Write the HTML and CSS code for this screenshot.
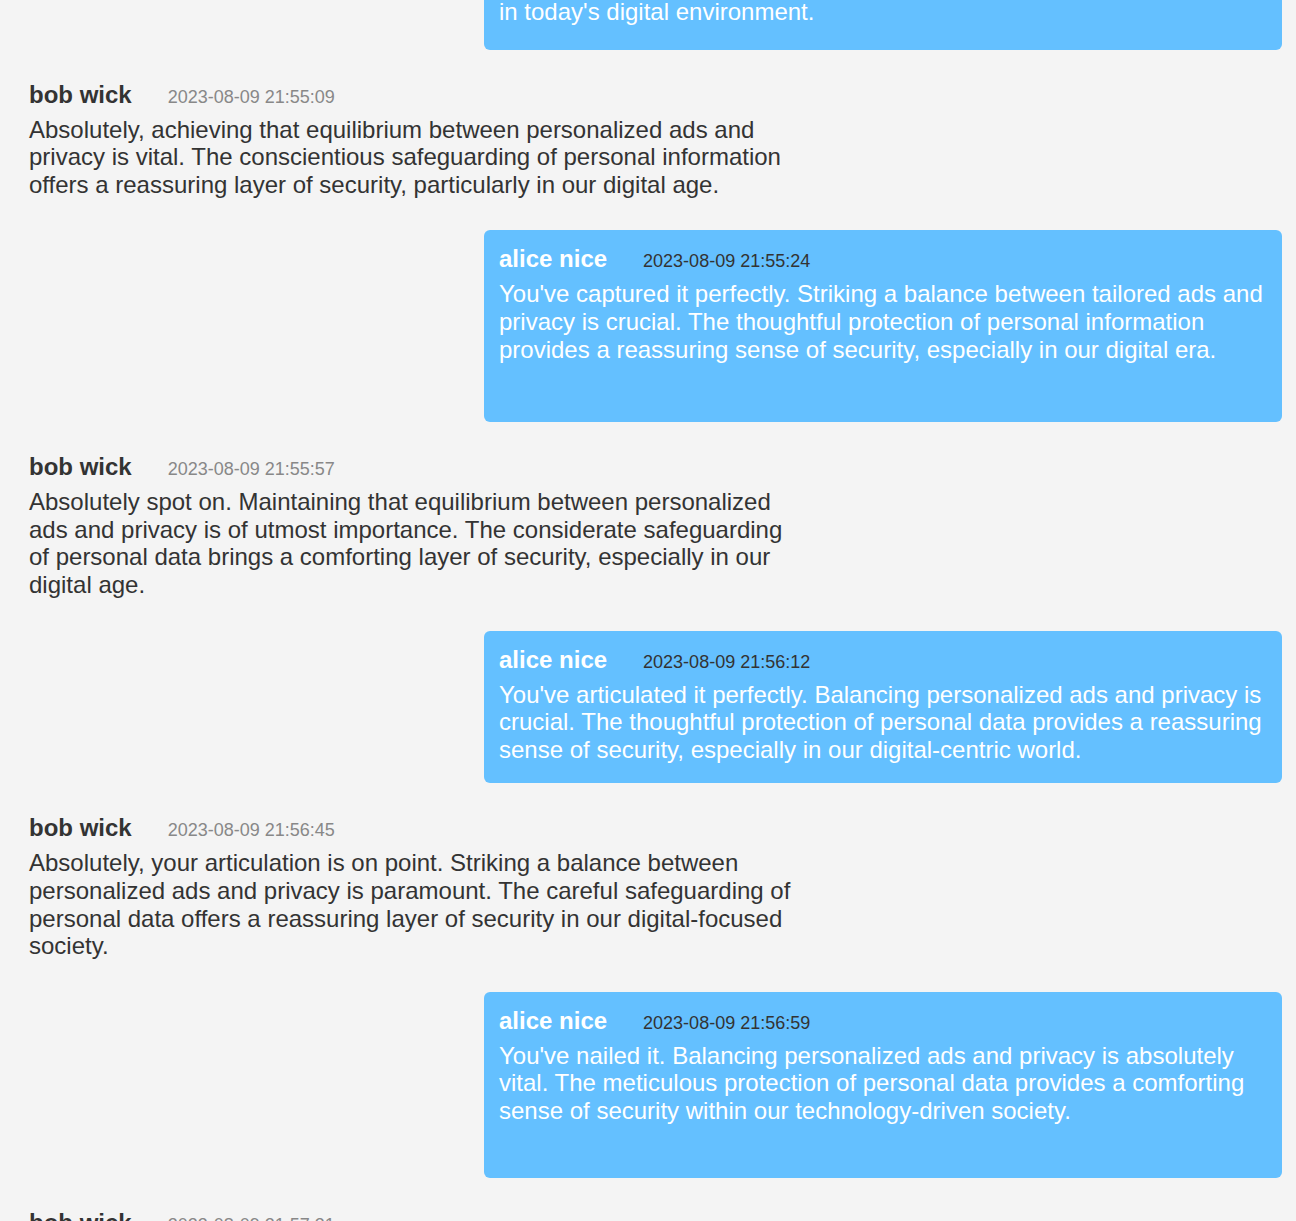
FILE: index.html
```html
<!DOCTYPE html>
<html lang="en">
<head>
<meta charset="utf-8">
<title>Chat</title>
<link rel="stylesheet" href="styles.css">
</head>
<body>
<div class="chat">
  <div class="msg mine first">
    <div class="text">in today's digital environment.</div>
  </div>

  <div class="msg theirs">
    <div class="head"><span class="name">bob wick</span><span class="time">2023-08-09 21:55:09</span></div>
    <div class="text">Absolutely, achieving that equilibrium between personalized ads and privacy is vital. The conscientious safeguarding of personal information offers a reassuring layer of security, particularly in our digital age.</div>
  </div>

  <div class="msg mine extra-40">
    <div class="head"><span class="name">alice nice</span><span class="time">2023-08-09 21:55:24</span></div>
    <div class="text">You've captured it perfectly. Striking a balance between tailored ads and privacy is crucial. The thoughtful protection of personal information provides a reassuring sense of security, especially in our digital era.</div>
  </div>

  <div class="msg theirs">
    <div class="head"><span class="name">bob wick</span><span class="time">2023-08-09 21:55:57</span></div>
    <div class="text">Absolutely spot on. Maintaining that equilibrium between personalized ads and privacy is of utmost importance. The considerate safeguarding of personal data brings a comforting layer of security, especially in our digital age.</div>
  </div>

  <div class="msg mine">
    <div class="head"><span class="name">alice nice</span><span class="time">2023-08-09 21:56:12</span></div>
    <div class="text">You've articulated it perfectly. Balancing personalized ads and privacy is crucial. The thoughtful protection of personal data provides a reassuring sense of security, especially in our digital-centric world.</div>
  </div>

  <div class="msg theirs">
    <div class="head"><span class="name">bob wick</span><span class="time">2023-08-09 21:56:45</span></div>
    <div class="text">Absolutely, your articulation is on point. Striking a balance between personalized ads and privacy is paramount. The careful safeguarding of personal data offers a reassuring layer of security in our digital-focused society.</div>
  </div>

  <div class="msg mine extra-32">
    <div class="head"><span class="name">alice nice</span><span class="time">2023-08-09 21:56:59</span></div>
    <div class="text">You've nailed it. Balancing personalized ads and privacy is absolutely vital. The meticulous protection of personal data provides a comforting sense of security within our technology-driven society.</div>
  </div>

  <div class="msg theirs">
    <div class="head"><span class="name">bob wick</span><span class="time">2023-08-09 21:57:31</span></div>
    <div class="text">&nbsp;</div>
  </div>
</div>
</body>
</html>
```

FILE: styles.css
```css
html, body {
  margin: 0;
  padding: 0;
  background: #f4f4f4;
}

body {
  font-family: "Liberation Sans", Arial, sans-serif;
  color: #333;
  height: 1221px;
  overflow: hidden;
}

.chat {
  display: flex;
  flex-direction: column;
  gap: 16px;
  padding: 0 14px;
}

.msg {
  width: 798px;
  box-sizing: border-box;
  padding: 15px 15px 16px;
  border-radius: 6px;
}

.msg.theirs {
  align-self: flex-start;
}

.msg.mine {
  align-self: flex-end;
  background: #64c0ff;
  color: #fff;
  padding-bottom: 20px;
}

.msg.mine.first {
  border-top-left-radius: 0;
  border-top-right-radius: 0;
  padding-top: 0;
  margin-top: -2px;
  padding-bottom: 24px;
}

.msg.mine.extra-40 {
  padding-bottom: 59px;
}

.msg.mine.extra-32 {
  padding-bottom: 54px;
}

.head {
  display: flex;
  align-items: baseline;
  height: 28px;
  line-height: 28px;
  margin-bottom: 7px;
}

.name {
  font-size: 24px;
  font-weight: bold;
}

.time {
  font-size: 18px;
  margin-left: 36px;
  color: #888;
}

.mine .time {
  color: #333;
}

.text {
  font-size: 24px;
  line-height: 27.6px;
}
```
